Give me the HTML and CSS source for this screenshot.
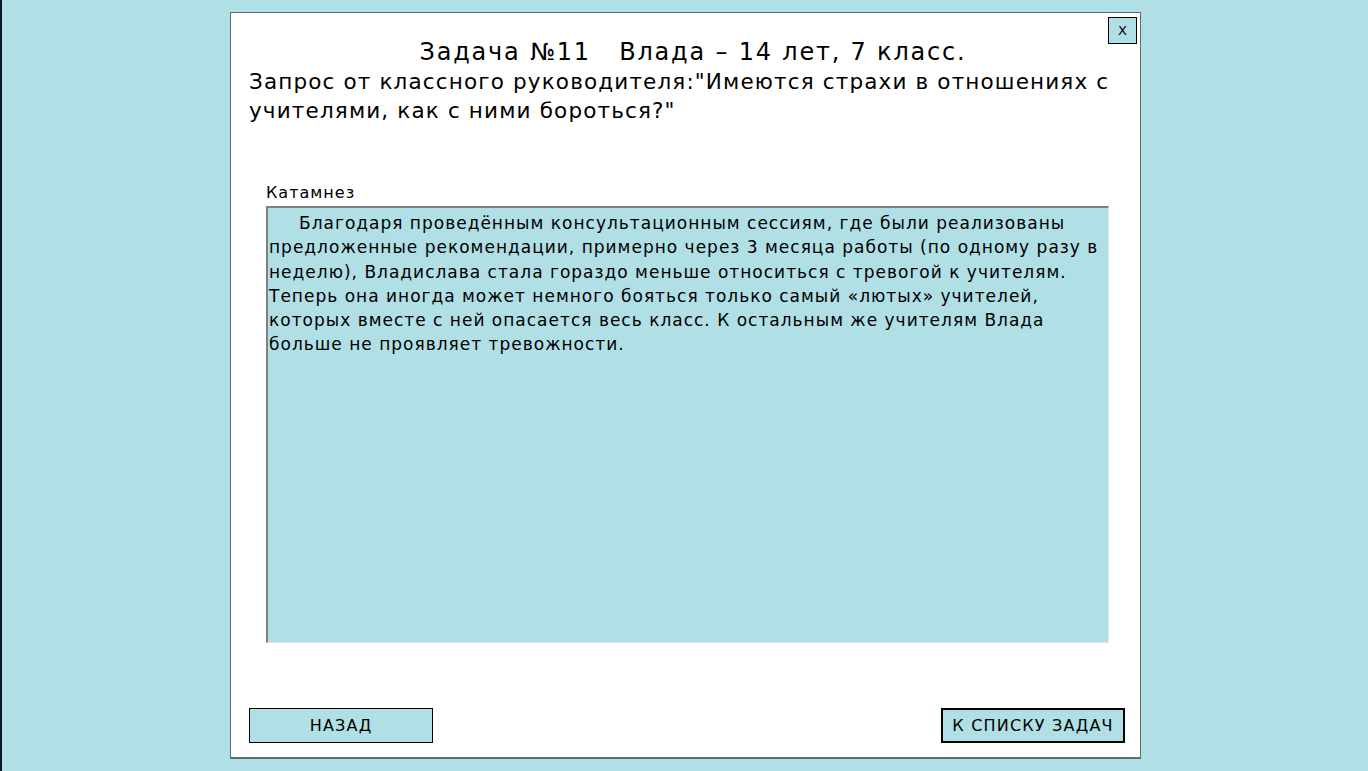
FILE: index.html
```html
<!DOCTYPE html>
<html lang="ru">
<head>
<meta charset="utf-8">
<title>Задача №11</title>
<link rel="stylesheet" href="styles.css">
</head>
<body>
<div class="screen">
  <div class="dialog">
    <button class="close">X</button>
    <div class="title">Задача №11&nbsp;&nbsp; Влада – 14 лет, 7 класс.</div>
    <div class="request">Запрос от классного руководителя:"Имеются страхи в отношениях с учителями, как с ними бороться?"</div>
    <div class="field">
      <div class="label">Катамнез</div>
      <div class="box"><p class="para">Благодаря проведённым консультационным сессиям, где были реализованы предложенные рекомендации, примерно через 3 месяца работы (по одному разу в неделю), Владислава стала гораздо меньше относиться с тревогой к учителям. Теперь она иногда может немного бояться только самый «лютых» учителей, которых вместе с ней опасается весь класс. К остальным же учителям Влада больше не проявляет тревожности.</p></div>
    </div>
    <div class="actions">
      <button class="btn">НАЗАД</button>
      <button class="btn btn-focus">К СПИСКУ ЗАДАЧ</button>
    </div>
  </div>
</div>
</body>
</html>
```

FILE: styles.css
```css
html, body {
  margin: 0;
  padding: 0;
  height: 100%;
}
body {
  background: #b0dfe5;
  font-family: "DejaVu Sans", Verdana, sans-serif;
  color: #000;
  overflow: hidden;
}
.screen {
  height: 769px;
  border-left: 2px solid #0b1a22;
  border-bottom: 2px solid #0b1a22;
  padding: 12px 0 0 228px;
}
.dialog {
  position: relative;
  box-sizing: border-box;
  width: 911px;
  height: 747px;
  background: #fff;
  border: 1px solid #5c6e72;
  border-bottom-width: 2px;
  padding: 24px 15px 14px 18px;
  display: flex;
  flex-direction: column;
}
.close {
  position: absolute;
  top: 4px;
  right: 3px;
  width: 29px;
  height: 27px;
  padding: 0;
  border: 1px solid #000;
  background: #b0dfe5;
  font-family: "DejaVu Sans", sans-serif;
  font-size: 13px;
  color: #000;
}
.title {
  text-align: center;
  font-size: 24px;
  line-height: 30px;
  letter-spacing: 1.8px;
  padding-left: 12px;
}
.request {
  font-size: 21.5px;
  line-height: 29px;
  letter-spacing: 1.15px;
  padding-right: 10px;
}
.field {
  margin-top: 57px;
  margin-left: 17px;
  margin-right: 16px;
}
.label {
  font-size: 16px;
  line-height: 22px;
  letter-spacing: 1px;
}
.box {
  box-sizing: border-box;
  height: 437px;
  margin-top: 2px;
  background: #b0dfe5;
  border-top: 2px solid #808080;
  border-left: 2px solid #808080;
  border-right: 1px solid #e3e3e3;
  border-bottom: 1px solid #e3e3e3;
  padding: 3px 2px 0 1px;
}
.para {
  margin: 0;
  font-size: 17px;
  line-height: 24.3px;
  letter-spacing: 1px;
  text-indent: 30px;
}
.actions {
  margin-top: auto;
  display: flex;
  justify-content: space-between;
}
.btn {
  box-sizing: border-box;
  width: 184px;
  height: 35px;
  background: #b0dfe5;
  border: 1px solid #000;
  font-family: "DejaVu Sans", sans-serif;
  font-size: 16px;
  letter-spacing: 1.2px;
  color: #000;
  padding: 0;
}
.btn-focus {
  border-width: 2px;
}
```
